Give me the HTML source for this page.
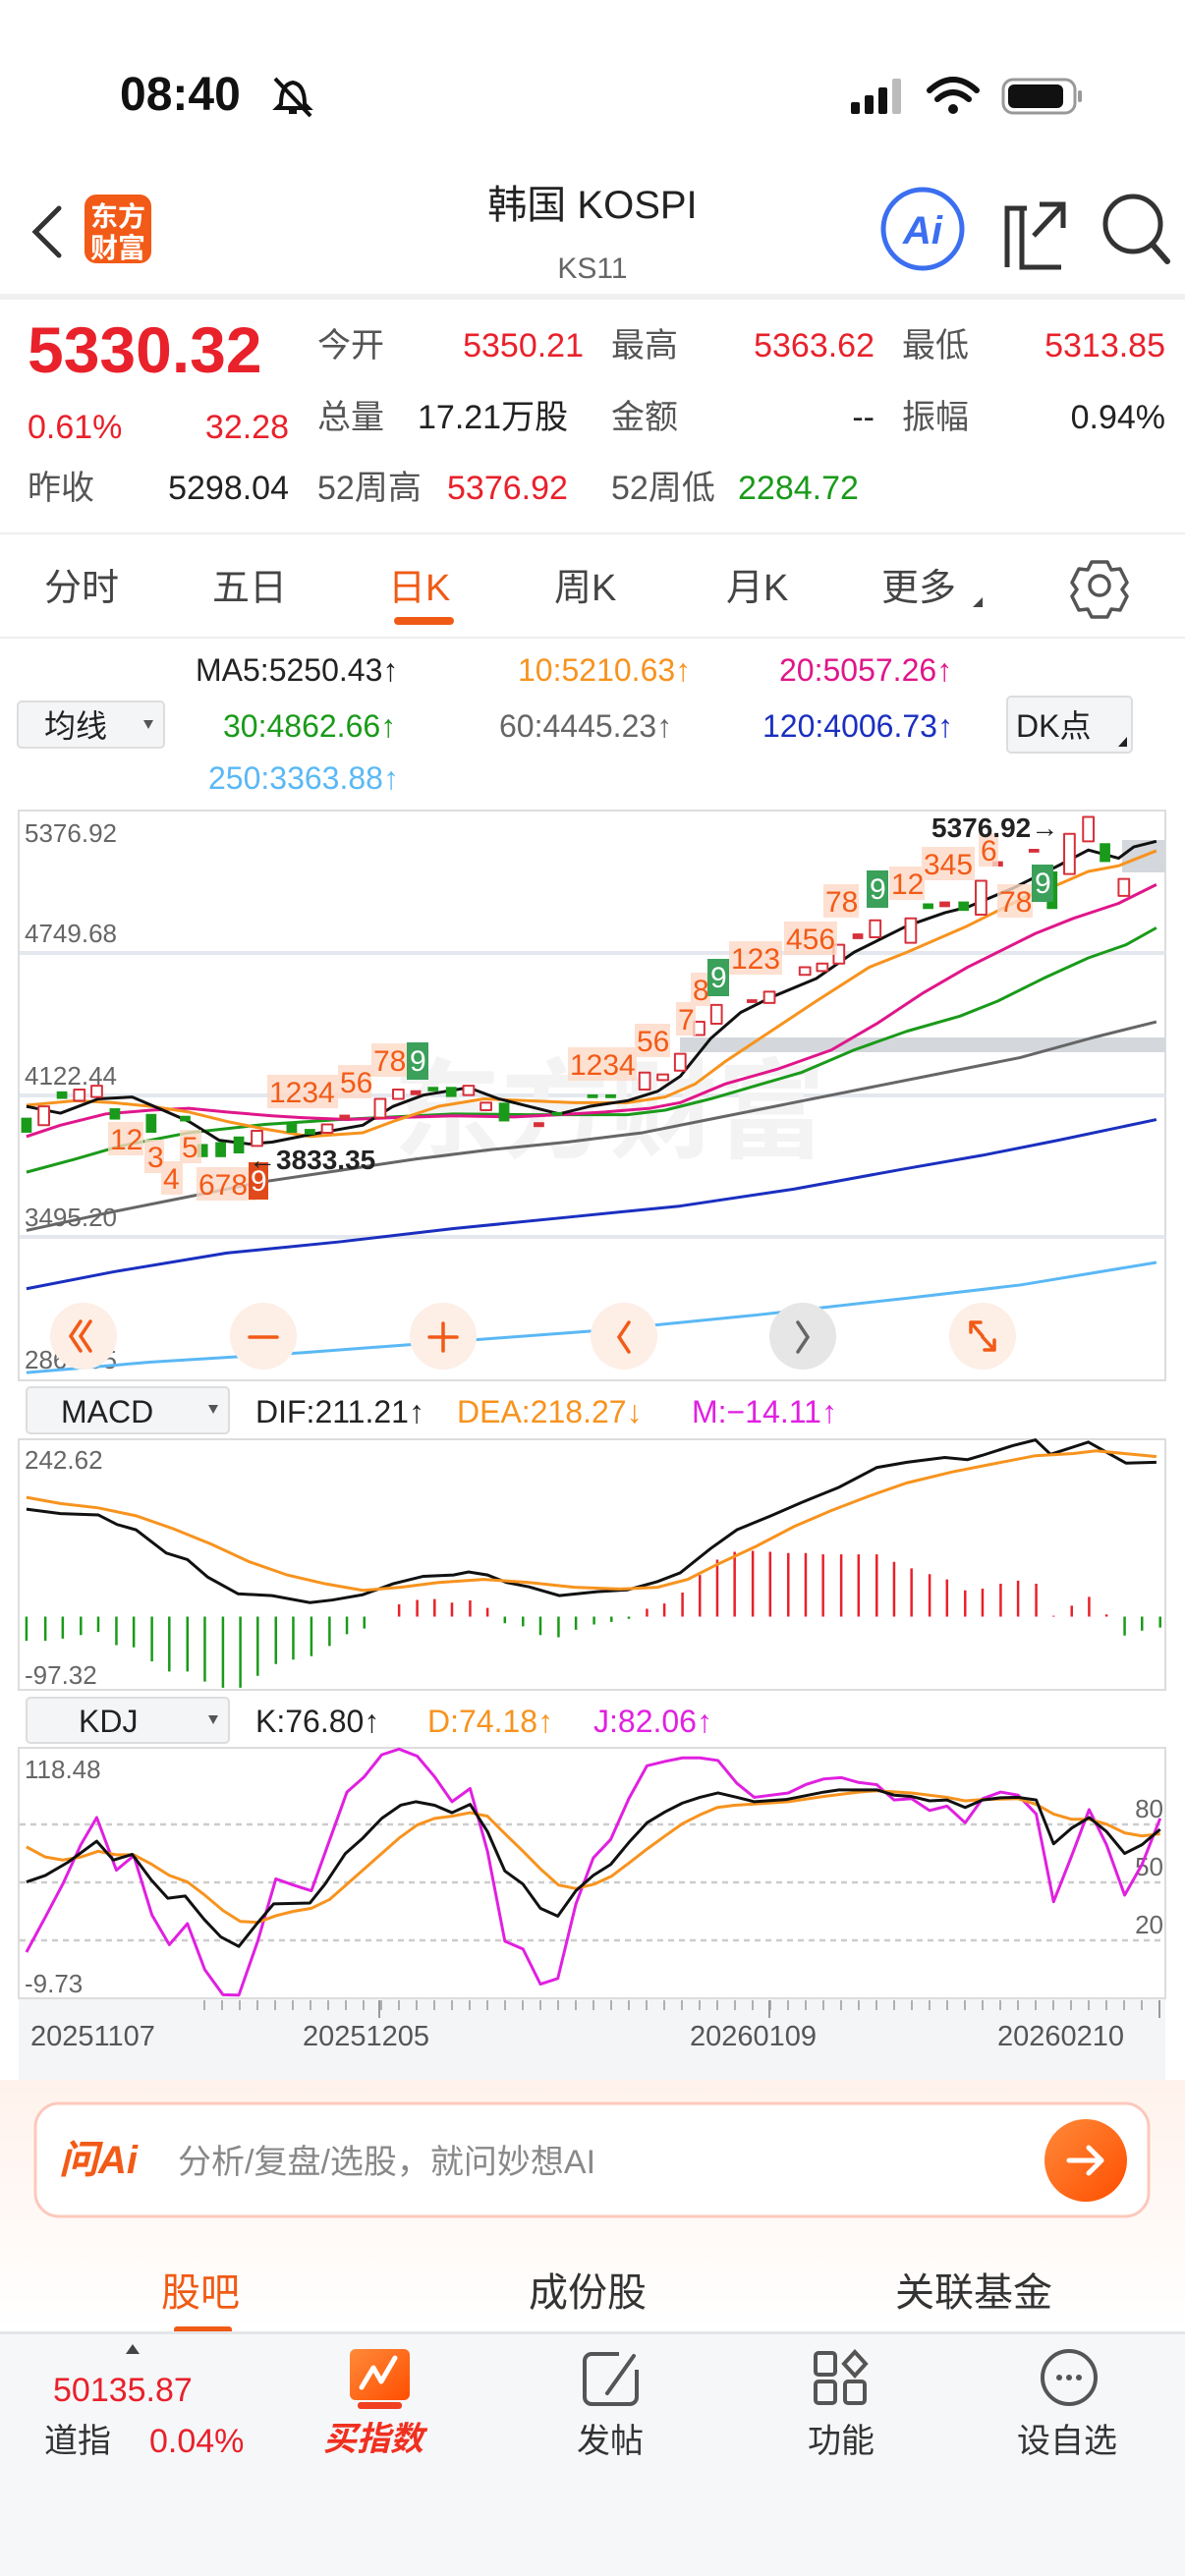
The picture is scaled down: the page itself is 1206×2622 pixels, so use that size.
<!DOCTYPE html>
<html><head><meta charset="utf-8"><style>
html,body{margin:0;padding:0;background:#fff}
svg{display:block}
text{font-family:"Liberation Sans","Noto Sans CJK SC",sans-serif}
</style></head><body>
<svg width="1206" height="2622" viewBox="0 0 1206 2622" xmlns="http://www.w3.org/2000/svg">
<rect width="1206" height="2622" fill="#fff"/>
<!-- status bar -->
<text x="122" y="112" font-size="48" font-weight="bold" fill="#111">08:40</text>
<g transform="translate(280,80)" fill="none" stroke="#111" stroke-width="4"><path d="M6 26 Q6 6 18 4 Q30 6 30 26 L34 30 H2 Z"/><path d="M14 34 h8"/><path d="M0 0 L36 38"/></g>
<g fill="#111"><rect x="866" y="104" width="9" height="12" rx="2"/><rect x="880" y="97" width="9" height="19" rx="2"/><rect x="894" y="89" width="9" height="27" rx="2"/><rect x="908" y="80" width="9" height="36" rx="2" fill="#bbb"/></g>
<g fill="none" stroke="#111" stroke-width="6" stroke-linecap="round"><path d="M946 92 Q970 70 994 92"/><path d="M954 101 Q970 87 986 101"/></g><circle cx="970" cy="111" r="5" fill="#111"/>
<rect x="1021" y="81" width="73" height="34" rx="10" fill="none" stroke="#999" stroke-width="3"/><rect x="1026" y="86" width="56" height="24" rx="6" fill="#111"/><rect x="1097" y="92" width="4" height="12" rx="2" fill="#999"/>
<!-- header -->
<path d="M60 212 L36 236 L60 260" fill="none" stroke="#333" stroke-width="5" stroke-linecap="round"/>
<rect x="86" y="198" width="68" height="70" rx="12" fill="#f25a17"/>
<text x="120" y="230" font-size="28" font-weight="bold" fill="#fff" text-anchor="middle">东方</text>
<text x="120" y="262" font-size="28" font-weight="bold" fill="#fff" text-anchor="middle">财富</text>
<text x="603" y="222" font-size="40" fill="#222" text-anchor="middle">韩国 KOSPI</text>
<text x="603" y="283" font-size="30" fill="#666" text-anchor="middle">KS11</text>
<circle cx="939" cy="233" r="40" fill="none" stroke="#3b6ff0" stroke-width="5"/>
<text x="939" y="248" font-size="40" font-weight="bold" font-style="italic" fill="#3b6ff0" text-anchor="middle">Ai</text>
<g fill="none" stroke="#333" stroke-width="5"><path d="M1040 212 V272 H1080 M1045 212 H1025 V272"/><path d="M1025 212 H1040 M1058 208 H1082 V232 M1082 208 L1052 240"/></g>
<circle cx="1153" cy="228" r="28" fill="none" stroke="#333" stroke-width="5"/><path d="M1174 250 L1188 266" stroke="#333" stroke-width="6" stroke-linecap="round"/>
<rect x="0" y="299" width="1206" height="6" fill="#f0f0f0"/>
<!-- quote -->
<text x="28" y="379" font-size="66" font-weight="bold" fill="#e8212b">5330.32</text>
<g font-size="34" fill="#555"><text x="323" y="363">今开</text><text x="622" y="363">最高</text><text x="918" y="363">最低</text>
<text x="323" y="436">总量</text><text x="622" y="436">金额</text><text x="918" y="436">振幅</text>
<text x="28" y="508">昨收</text><text x="323" y="508">52周高</text><text x="622" y="508">52周低</text></g>
<g font-size="34" text-anchor="end" fill="#e8212b"><text x="594" y="363">5350.21</text><text x="890" y="363">5363.62</text><text x="1186" y="363">5313.85</text><text x="294" y="446">32.28</text></g>
<text x="28" y="446" font-size="34" fill="#e8212b">0.61%</text>
<text x="425" y="436" font-size="34" fill="#222">17.21万股</text>
<text x="890" y="436" font-size="34" fill="#222" text-anchor="end">--</text>
<text x="1186" y="436" font-size="34" fill="#222" text-anchor="end">0.94%</text>
<text x="294" y="508" font-size="34" fill="#222" text-anchor="end">5298.04</text>
<text x="455" y="508" font-size="34" fill="#e8212b">5376.92</text>
<text x="751" y="508" font-size="34" fill="#1a9a1a">2284.72</text>
<rect x="0" y="542" width="1206" height="2" fill="#eee"/>
<!-- tabs -->
<g font-size="38" fill="#444"><text x="45" y="611">分时</text><text x="216" y="611">五日</text><text x="564" y="611">周K</text><text x="739" y="611">月K</text><text x="897" y="611">更多</text></g>
<text x="395" y="611" font-size="38" fill="#f05a14">日K</text>
<rect x="401" y="628" width="61" height="8" rx="4" fill="#f05a14"/>
<path d="M990 618 L1000 608 V618 Z" fill="#444"/>
<circle cx="1119" cy="596" r="10" fill="none" stroke="#555" stroke-width="3.5"/>
<path d="M1111 572 h16 l4 8 l9 -1 l7 14 l-5 7 l5 7 l-7 14 l-9 -1 l-4 8 h-16 l-4 -8 l-9 1 l-7 -14 l5 -7 l-5 -7 l7 -14 l9 1 z" fill="none" stroke="#555" stroke-width="3.5" stroke-linejoin="round"/>
<rect x="0" y="648" width="1206" height="2" fill="#eee"/>
<!-- MA legend -->
<g font-size="32"><text x="199" y="693" fill="#222">MA5:5250.43↑</text><text x="527" y="693" fill="#f7931e">10:5210.63↑</text><text x="793" y="693" fill="#e0168a">20:5057.26↑</text>
<text x="227" y="750" fill="#1a9a1a">30:4862.66↑</text><text x="508" y="750" fill="#666">60:4445.23↑</text><text x="776" y="750" fill="#1a2fc0">120:4006.73↑</text>
<text x="212" y="803" fill="#5ab8f5">250:3363.88↑</text></g>
<rect x="18" y="714" width="149" height="47" rx="4" fill="#f4f5f7" stroke="#ddd" stroke-width="2"/>
<text x="45" y="750" font-size="32" fill="#222">均线</text><path d="M146 733 h10 l-5 9 z" fill="#555"/>
<rect x="1025" y="709" width="127" height="57" rx="4" fill="#f4f5f7" stroke="#ddd" stroke-width="2"/>
<text x="1034" y="750" font-size="32" fill="#222">DK点</text><path d="M1138 760 l9 -10 v10 z" fill="#222"/>
<!-- main chart -->
<rect x="19" y="825" width="1167" height="580" fill="#fff" stroke="#ddd" stroke-width="2"/>
<g stroke="#e4e8ee" stroke-width="4"><path d="M20 970 H1186 M20 1115 H1186 M20 1259 H1186"/></g>
<rect x="1142" y="855" width="44" height="33" fill="#d4d7dc"/>
<rect x="692" y="1056" width="494" height="15" fill="#d4d7dc"/>
<text x="400" y="1170" font-size="110" fill="#f3f3f3" font-weight="bold">东方财富</text>
<g font-size="26" fill="#666"><text x="25" y="857">5376.92</text><text x="25" y="959">4749.68</text><text x="25" y="1104">4122.44</text><text x="25" y="1248">3495.20</text><text x="25" y="1393">2867.95</text></g>
<g transform="translate(0,820) scale(0.7692,0.3827)" fill="none" stroke-width="3" stroke-linejoin="round">
<g vector-effect="non-scaling-stroke">
<polyline vector-effect="non-scaling-stroke" stroke="#5ab8f5" points="35,1508 200,1480 400,1455 600,1425 800,1395 1000,1355 1200,1310 1350,1275 1530,1215"/>
<polyline vector-effect="non-scaling-stroke" stroke="#1a2fc0" points="35,1285 150,1240 300,1190 450,1160 600,1125 750,1095 900,1065 1050,1020 1200,965 1300,930 1400,890 1530,835"/>
<polyline vector-effect="non-scaling-stroke" stroke="#666" points="35,1130 150,1080 250,1040 350,1000 450,970 550,940 650,915 750,895 850,870 950,830 1050,790 1150,750 1250,710 1350,670 1450,615 1530,575"/>
<polyline vector-effect="non-scaling-stroke" stroke="#1a9a1a" points="35,975 100,940 160,905 250,870 350,848 450,835 520,828 600,820 700,822 830,822 880,810 940,780 1000,745 1060,710 1130,650 1200,600 1270,560 1320,520 1380,460 1440,405 1490,370 1530,325"/>
<polyline vector-effect="non-scaling-stroke" stroke="#e0168a" points="35,880 80,850 140,820 200,810 250,805 300,815 360,825 400,830 460,835 520,830 600,825 680,828 740,822 800,815 860,805 900,790 960,740 1030,700 1100,650 1160,580 1220,500 1280,430 1330,380 1370,340 1420,300 1480,260 1530,210"/>
<polyline vector-effect="non-scaling-stroke" stroke="#f7931e" points="35,797 100,785 150,790 200,800 250,815 300,840 350,860 410,880 480,870 520,840 580,800 640,780 700,785 760,790 830,790 880,775 920,740 960,680 1020,600 1080,520 1150,430 1200,390 1280,320 1360,240 1400,210 1440,175 1480,160 1530,120"/>
<polyline vector-effect="non-scaling-stroke" stroke="#111" points="35,800 80,818 130,780 175,775 210,805 250,840 290,890 330,900 360,895 410,875 480,850 520,800 560,770 620,750 660,780 700,800 740,820 780,800 830,785 870,760 900,720 940,620 980,550 1020,510 1080,460 1130,390 1160,360 1200,320 1250,285 1280,270 1340,220 1400,160 1440,118 1480,140 1500,110 1530,95"/>
</g>
<g stroke-width="2">
<rect x="28" y="830" width="14" height="40" fill="#1a9a1a" stroke="none"/>
<rect x="51" y="800" width="14" height="50" fill="#fff" stroke="#d7303a" vector-effect="non-scaling-stroke"/>
<rect x="75" y="760" width="14" height="20" fill="#1a9a1a" stroke="none"/>
<rect x="98" y="755" width="14" height="30" fill="#fff" stroke="#d7303a" vector-effect="non-scaling-stroke"/>
<rect x="121" y="745" width="14" height="30" fill="#fff" stroke="#d7303a" vector-effect="non-scaling-stroke"/>
<rect x="145" y="805" width="14" height="30" fill="#1a9a1a" stroke="none"/>
<rect x="193" y="820" width="14" height="50" fill="#1a9a1a" stroke="none"/>
<rect x="238" y="825" width="14" height="15" fill="#1a9a1a" stroke="none"/>
<rect x="261" y="900" width="14" height="35" fill="#1a9a1a" stroke="none"/>
<rect x="285" y="895" width="14" height="40" fill="#1a9a1a" stroke="none"/>
<rect x="309" y="880" width="14" height="45" fill="#1a9a1a" stroke="none"/>
<rect x="333" y="865" width="14" height="40" fill="#fff" stroke="#d7303a" vector-effect="non-scaling-stroke"/>
<rect x="379" y="845" width="14" height="25" fill="#1a9a1a" stroke="none"/>
<rect x="403" y="860" width="14" height="15" fill="#1a9a1a" stroke="none"/>
<rect x="426" y="848" width="14" height="22" fill="#fff" stroke="#d7303a" vector-effect="non-scaling-stroke"/>
<rect x="449" y="822" width="14" height="13" fill="#d7303a" stroke="none"/>
<rect x="496" y="780" width="14" height="50" fill="#fff" stroke="#d7303a" vector-effect="non-scaling-stroke"/>
<rect x="520" y="755" width="14" height="25" fill="#fff" stroke="#d7303a" vector-effect="non-scaling-stroke"/>
<rect x="543" y="757" width="14" height="13" fill="#d7303a" stroke="none"/>
<rect x="566" y="748" width="14" height="12" fill="#1a9a1a" stroke="none"/>
<rect x="590" y="748" width="14" height="27" fill="#1a9a1a" stroke="none"/>
<rect x="613" y="745" width="14" height="25" fill="#fff" stroke="#d7303a" vector-effect="non-scaling-stroke"/>
<rect x="636" y="790" width="14" height="20" fill="#fff" stroke="#d7303a" vector-effect="non-scaling-stroke"/>
<rect x="660" y="790" width="14" height="50" fill="#1a9a1a" stroke="none"/>
<rect x="706" y="842" width="14" height="13" fill="#d7303a" stroke="none"/>
<rect x="730" y="815" width="14" height="10" fill="#1a9a1a" stroke="none"/>
<rect x="777" y="768" width="14" height="10" fill="#1a9a1a" stroke="none"/>
<rect x="801" y="768" width="14" height="10" fill="#1a9a1a" stroke="none"/>
<rect x="846" y="710" width="14" height="45" fill="#fff" stroke="#d7303a" vector-effect="non-scaling-stroke"/>
<rect x="870" y="715" width="14" height="15" fill="#fff" stroke="#d7303a" vector-effect="non-scaling-stroke"/>
<rect x="893" y="660" width="14" height="45" fill="#fff" stroke="#d7303a" vector-effect="non-scaling-stroke"/>
<rect x="918" y="575" width="14" height="35" fill="#fff" stroke="#d7303a" vector-effect="non-scaling-stroke"/>
<rect x="941" y="530" width="14" height="50" fill="#fff" stroke="#d7303a" vector-effect="non-scaling-stroke"/>
<rect x="988" y="515" width="14" height="10" fill="#d7303a" stroke="none"/>
<rect x="1011" y="495" width="14" height="30" fill="#fff" stroke="#d7303a" vector-effect="non-scaling-stroke"/>
<rect x="1058" y="430" width="14" height="20" fill="#fff" stroke="#d7303a" vector-effect="non-scaling-stroke"/>
<rect x="1081" y="420" width="14" height="20" fill="#fff" stroke="#d7303a" vector-effect="non-scaling-stroke"/>
<rect x="1103" y="370" width="14" height="50" fill="#fff" stroke="#d7303a" vector-effect="non-scaling-stroke"/>
<rect x="1128" y="340" width="14" height="15" fill="#d7303a" stroke="none"/>
<rect x="1151" y="305" width="14" height="45" fill="#fff" stroke="#d7303a" vector-effect="non-scaling-stroke"/>
<rect x="1198" y="300" width="14" height="65" fill="#fff" stroke="#d7303a" vector-effect="non-scaling-stroke"/>
<rect x="1221" y="260" width="14" height="15" fill="#1a9a1a" stroke="none"/>
<rect x="1243" y="255" width="14" height="15" fill="#d7303a" stroke="none"/>
<rect x="1268" y="255" width="14" height="25" fill="#1a9a1a" stroke="none"/>
<rect x="1291" y="200" width="14" height="90" fill="#fff" stroke="#d7303a" vector-effect="non-scaling-stroke"/>
<rect x="1313" y="148" width="14" height="14" fill="#d7303a" stroke="none"/>
<rect x="1361" y="115" width="14" height="10" fill="#d7303a" stroke="none"/>
<rect x="1385" y="175" width="14" height="100" fill="#1a9a1a" stroke="none"/>
<rect x="1408" y="75" width="14" height="107" fill="#fff" stroke="#d7303a" vector-effect="non-scaling-stroke"/>
<rect x="1433" y="30" width="14" height="65" fill="#fff" stroke="#d7303a" vector-effect="non-scaling-stroke"/>
<rect x="1455" y="100" width="14" height="50" fill="#1a9a1a" stroke="none"/>
<rect x="1480" y="195" width="14" height="45" fill="#fff" stroke="#d7303a" vector-effect="non-scaling-stroke"/>
</g>
</g>
<!-- TD numbers -->
<g font-size="30" fill="#f25a17">
<g fill="#fdd9c6" opacity="0.8"><rect x="110" y="1142" width="36" height="34"/><rect x="147" y="1160" width="20" height="34"/><rect x="164" y="1182" width="22" height="34"/><rect x="183" y="1150" width="22" height="34"/><rect x="200" y="1188" width="60" height="34"/><rect x="272" y="1094" width="72" height="34"/><rect x="344" y="1084" width="34" height="34"/><rect x="378" y="1062" width="36" height="34"/><rect x="578" y="1066" width="70" height="34"/><rect x="646" y="1042" width="36" height="34"/><rect x="688" y="1020" width="20" height="34"/><rect x="703" y="990" width="20" height="34"/><rect x="742" y="958" width="54" height="34"/><rect x="798" y="938" width="54" height="34"/><rect x="838" y="900" width="36" height="34"/><rect x="905" y="882" width="36" height="34"/><rect x="938" y="862" width="54" height="34"/><rect x="996" y="848" width="20" height="34"/><rect x="1015" y="900" width="36" height="34"/></g>
<text x="112" y="1170">12</text><text x="150" y="1188">3</text><text x="166" y="1210">4</text><text x="185" y="1178">5</text><text x="202" y="1216">678</text>
<text x="274" y="1122">1234</text><text x="346" y="1112">56</text><text x="380" y="1090">78</text>
<text x="580" y="1094">1234</text><text x="648" y="1070">56</text><text x="690" y="1048">7</text><text x="705" y="1018">8</text>
<text x="744" y="986">123</text><text x="800" y="966">456</text><text x="840" y="928">78</text><text x="907" y="910">12</text><text x="940" y="890">345</text><text x="998" y="876">6</text><text x="1017" y="928">78</text>
</g>
<g font-size="30" fill="#fff"><rect x="253" y="1183" width="20" height="38" fill="#e04a1a"/><text x="255" y="1212">9</text>
<rect x="414" y="1061" width="22" height="38" fill="#3aa05a"/><text x="417" y="1090">9</text>
<rect x="720" y="976" width="22" height="38" fill="#3aa05a"/><text x="723" y="1005">9</text>
<rect x="882" y="886" width="22" height="38" fill="#3aa05a"/><text x="885" y="915">9</text>
<rect x="1050" y="880" width="22" height="38" fill="#3aa05a"/><text x="1053" y="909">9</text></g>
<text x="948" y="852" font-size="28" font-weight="bold" fill="#222">5376.92→</text>
<text x="253" y="1190" font-size="28" font-weight="bold" fill="#222">←3833.35</text>
<!-- nav buttons -->
<g><circle cx="85" cy="1360" r="34" fill="#fdeee6"/><circle cx="268" cy="1360" r="34" fill="#fdeee6"/><circle cx="451" cy="1360" r="34" fill="#fdeee6"/><circle cx="635" cy="1360" r="34" fill="#fdeee6"/><circle cx="817" cy="1360" r="34" fill="#e6e6e6"/><circle cx="1000" cy="1360" r="34" fill="#fdeee6"/></g>
<g fill="none" stroke="#f25a17" stroke-width="3.5" stroke-linecap="round"><path d="M82 1345 L72 1360 L82 1375 M92 1345 L82 1360 L92 1375"/><path d="M254 1361 H282"/><path d="M437 1361 H465 M451 1347 V1375"/><path d="M640 1346 L630 1361 L640 1376"/><path d="M988 1346 L1000 1360 M988 1346 V1356 M988 1346 H998 M1012 1374 L1000 1361 M1012 1374 V1364 M1012 1374 H1002"/></g>
<path d="M812 1346 L822 1361 L812 1376" fill="none" stroke="#666" stroke-width="3.5" stroke-linecap="round"/>
<!-- MACD -->
<rect x="27" y="1412" width="206" height="47" rx="4" fill="#f4f5f7" stroke="#ddd" stroke-width="2"/>
<text x="62" y="1448" font-size="32" fill="#222">MACD</text><path d="M212 1430 h10 l-5 9 z" fill="#555"/>
<g font-size="32"><text x="260" y="1448" fill="#222">DIF:211.21↑</text><text x="465" y="1448" fill="#f7931e">DEA:218.27↓</text><text x="704" y="1448" fill="#e020e0">M:−14.11↑</text></g>
<rect x="19" y="1465" width="1167" height="255" fill="#fff" stroke="#ddd" stroke-width="2"/>
<text x="25" y="1495" font-size="26" fill="#666">242.62</text><text x="25" y="1714" font-size="26" fill="#666">-97.32</text>
<g transform="translate(0,1400) scale(0.7692,0.4464)">
<g stroke-width="2.5" vector-effect="non-scaling-stroke">
<path vector-effect="non-scaling-stroke" stroke="#1a9a1a" stroke-width="2.5" d="M35 550V605M60 550V605M83 550V600M107 550V592M130 550V585M154 550V615M177 550V620M201 550V652M224 550V675M248 550V675M271 550V698M295 550V712M318 550V712M341 550V685M365 550V658M388 550V648M412 550V640M436 550V617M459 550V590M482 550V577M668 550V565M692 550V572M715 550V592M739 550V597M762 550V580M786 550V568M809 550V562M832 550V555M1488 550V593M1511 550V582M1535 550V575"/>
<path vector-effect="non-scaling-stroke" stroke="#e8212b" stroke-width="2.5" d="M528 550V522M552 550V512M575 550V510M598 550V518M622 550V513M645 550V530M856 550V532M879 550V520M903 550V495M926 550V455M949 550V420M972 550V402M996 550V400M1019 550V402M1043 550V405M1066 550V405M1089 550V408M1113 550V408M1136 550V408M1160 550V408M1183 550V425M1206 550V440M1230 550V453M1253 550V465M1277 550V490M1300 550V486M1324 550V475M1347 550V468M1371 550V475M1394 550V548M1418 550V525M1441 550V505M1464 550V545"/>
</g>
<polyline vector-effect="non-scaling-stroke" fill="none" stroke="#111" stroke-width="3" points="35,305 80,315 130,318 155,340 180,352 220,405 248,420 275,460 315,498 360,502 410,518 440,512 480,500 520,475 560,458 600,455 620,448 645,455 670,472 700,482 740,502 790,493 830,489 870,470 900,450 940,395 975,352 1020,320 1060,290 1110,255 1160,210 1200,198 1250,187 1280,192 1300,182 1340,160 1370,147 1390,180 1440,152 1490,200 1530,198"/>
<polyline vector-effect="non-scaling-stroke" fill="none" stroke="#f7931e" stroke-width="3" points="35,278 80,292 130,302 180,320 230,350 280,385 330,425 380,455 430,475 480,490 530,483 580,472 640,465 700,472 760,483 820,487 870,483 910,465 950,430 1000,390 1050,345 1100,308 1150,275 1200,245 1260,220 1310,203 1370,183 1420,178 1450,172 1500,180 1530,185"/>
</g>
<!-- KDJ -->
<rect x="27" y="1728" width="206" height="46" rx="4" fill="#f4f5f7" stroke="#ddd" stroke-width="2"/>
<text x="80" y="1763" font-size="32" fill="#222">KDJ</text><path d="M212 1746 h10 l-5 9 z" fill="#555"/>
<g font-size="32"><text x="260" y="1763" fill="#222">K:76.80↑</text><text x="435" y="1763" fill="#f7931e">D:74.18↑</text><text x="604" y="1763" fill="#e020e0">J:82.06↑</text></g>
<rect x="19" y="1779" width="1167" height="255" fill="#fff" stroke="#ddd" stroke-width="2"/>
<g stroke="#ccc" stroke-width="2.5" stroke-dasharray="6 5"><path d="M20 1857H1186M20 1916H1186M20 1975H1186"/></g>
<text x="25" y="1810" font-size="26" fill="#666">118.48</text><text x="25" y="2028" font-size="26" fill="#666">-9.73</text>
<g font-size="26" fill="#666" text-anchor="end"><text x="1184" y="1850">80</text><text x="1184" y="1909">50</text><text x="1184" y="1968">20</text></g>
<g transform="translate(0,1400) scale(0.7692,0.4464)" fill="none" stroke-width="3" stroke-linejoin="round">
<polyline vector-effect="non-scaling-stroke" stroke="#e020e0" points="35,1315 60,1235 83,1160 107,1070 128,1008 154,1128 177,1095 201,1230 224,1298 248,1250 271,1355 295,1412 316,1413 341,1290 365,1148 388,1162 412,1175 436,1060 459,950 482,915 505,865 528,852 552,868 575,915 598,972 622,942 645,1085 668,1290 692,1308 715,1388 738,1375 762,1205 785,1100 808,1058 832,965 856,890 880,880 903,872 926,872 950,878 975,930 998,962 1043,952 1066,933 1090,920 1113,917 1136,928 1160,933 1183,968 1206,965 1230,992 1253,982 1277,1020 1300,965 1324,950 1347,957 1371,1000 1394,1200 1418,1095 1441,990 1464,1070 1488,1185 1511,1115 1535,1010"/>
<polyline vector-effect="non-scaling-stroke" stroke="#f7931e" points="35,1075 60,1098 83,1105 107,1098 130,1085 154,1093 177,1093 201,1115 224,1140 248,1155 271,1185 295,1220 318,1245 341,1247 365,1232 388,1222 412,1215 436,1195 459,1160 482,1125 505,1090 528,1055 552,1025 575,1010 598,1005 622,997 645,1005 668,1045 692,1085 715,1125 739,1162 762,1170 786,1160 809,1142 832,1112 856,1080 880,1050 903,1022 926,1002 949,985 972,980 1000,977 1043,972 1090,960 1136,950 1160,947 1206,952 1253,962 1277,970 1300,967 1347,965 1371,978 1394,1000 1418,1012 1441,1012 1464,1023 1488,1043 1511,1050 1535,1045"/>
<polyline vector-effect="non-scaling-stroke" stroke="#111" points="35,1155 60,1140 90,1110 128,1062 150,1105 175,1092 200,1150 222,1192 245,1187 270,1240 292,1280 316,1302 340,1250 362,1205 410,1203 430,1160 457,1090 480,1055 505,1010 530,980 550,972 575,980 598,997 622,978 645,1040 668,1130 692,1160 715,1215 738,1233 762,1175 785,1140 808,1115 832,1065 856,1020 880,995 903,975 926,962 950,952 975,962 998,972 1040,967 1090,950 1110,945 1160,945 1183,957 1206,960 1230,970 1253,968 1277,985 1300,968 1324,963 1347,962 1371,968 1394,1068 1418,1032 1441,1008 1464,1040 1488,1090 1511,1070 1535,1035"/>
</g>
<rect x="19" y="2035" width="1167" height="82" fill="#f4f5f7"/>
<g stroke="#999" stroke-width="1.5"><path d="M208 2036v10M226 2036v10M244 2036v10M262 2036v10M280 2036v10M298 2036v10M316 2036v10M334 2036v10M352 2036v10M370 2036v10M388 2036v10M406 2036v10M424 2036v10M442 2036v10M460 2036v10M478 2036v10M496 2036v10M514 2036v10M532 2036v10M550 2036v10M568 2036v10M586 2036v10M604 2036v10M622 2036v10M640 2036v10M658 2036v10M676 2036v10M694 2036v10M712 2036v10M730 2036v10M748 2036v10M766 2036v10M784 2036v10M802 2036v10M820 2036v10M838 2036v10M856 2036v10M874 2036v10M892 2036v10M910 2036v10M928 2036v10M946 2036v10M964 2036v10M982 2036v10M1000 2036v10M1018 2036v10M1036 2036v10M1054 2036v10M1072 2036v10M1090 2036v10M1108 2036v10M1126 2036v10M1144 2036v10M1162 2036v10"/><path d="M386 2036v18M783 2036v18M1180 2036v18" stroke-width="2"/></g>
<g font-size="29" fill="#555"><text x="31" y="2082">20251107</text><text x="308" y="2082">20251205</text><text x="702" y="2082">20260109</text><text x="1015" y="2082">20260210</text></g>
<!-- AI bar -->
<defs><linearGradient id="pg" x1="0" y1="0" x2="0" y2="1"><stop offset="0" stop-color="#fff2ec"/><stop offset="1" stop-color="#fff"/></linearGradient>
<linearGradient id="og" x1="0" y1="0" x2="1" y2="1"><stop offset="0" stop-color="#ff8a3a"/><stop offset="1" stop-color="#ff4e00"/></linearGradient></defs>
<rect x="0" y="2117" width="1206" height="257" fill="url(#pg)"/>
<rect x="36" y="2141" width="1133" height="115" rx="24" fill="#fff" stroke="#fcc8bc" stroke-width="3"/>
<text x="60" y="2212" font-size="40" font-weight="bold" font-style="italic" fill="#f25a17">问Ai</text>
<text x="181" y="2212" font-size="34" fill="#888">分析/复盘/选股，就问妙想AI</text>
<circle cx="1105" cy="2199" r="42" fill="url(#og)"/>
<path d="M1088 2199 H1120 M1108 2186 L1121 2199 L1108 2212" fill="none" stroke="#fff" stroke-width="5" stroke-linecap="round" stroke-linejoin="round"/>
<g font-size="40"><text x="164" y="2347" fill="#f05a14">股吧</text><text x="538" y="2347" fill="#333">成份股</text><text x="911" y="2347" fill="#333">关联基金</text></g>
<rect x="177" y="2368" width="59" height="8" rx="3" fill="#f05a14"/>
<!-- bottom bar -->
<rect x="0" y="2374" width="1206" height="248" fill="#f6f7f9"/>
<rect x="0" y="2373" width="1206" height="3" fill="#e4e5e8"/>
<path d="M128 2396 L135 2386 L142 2396 Z" fill="#444"/>
<text x="54" y="2444" font-size="34" fill="#e8212b">50135.87</text>
<text x="45" y="2496" font-size="34" fill="#333">道指</text><text x="152" y="2496" font-size="34" fill="#e8212b">0.04%</text>
<rect x="356" y="2391" width="61" height="52" rx="6" fill="url(#og)"/><rect x="364" y="2445" width="45" height="7" rx="3" fill="#f04020"/>
<path d="M368 2430 L380 2410 L388 2424 L402 2400" fill="none" stroke="#fff" stroke-width="5" stroke-linecap="round" stroke-linejoin="round"/>
<text x="329" y="2494" font-size="34" font-weight="bold" font-style="italic" fill="#f03020">买指数</text>
<path d="M630 2396 H602 a7 7 0 0 0 -7 7 V2440 a7 7 0 0 0 7 7 H641 a7 7 0 0 0 7 -7 V2412" fill="none" stroke="#555" stroke-width="4"/>
<path d="M645 2398 L618 2436" stroke="#555" stroke-width="4" stroke-linecap="round"/>
<text x="587" y="2496" font-size="34" fill="#333">发帖</text>
<g fill="none" stroke="#555" stroke-width="4"><rect x="830" y="2395" width="20" height="22" rx="3"/><rect x="830" y="2424" width="20" height="22" rx="3"/><rect x="860" y="2424" width="20" height="22" rx="3"/><path d="M870 2394 L881 2406 L870 2418 L859 2406 Z"/></g>
<text x="822" y="2496" font-size="34" fill="#333">功能</text>
<circle cx="1088" cy="2420" r="27" fill="none" stroke="#555" stroke-width="4"/>
<g fill="#555"><circle cx="1078" cy="2420" r="3"/><circle cx="1088" cy="2420" r="3"/><circle cx="1098" cy="2420" r="3"/></g>
<text x="1035" y="2496" font-size="34" fill="#333">设自选</text>
</svg>
</body></html>
